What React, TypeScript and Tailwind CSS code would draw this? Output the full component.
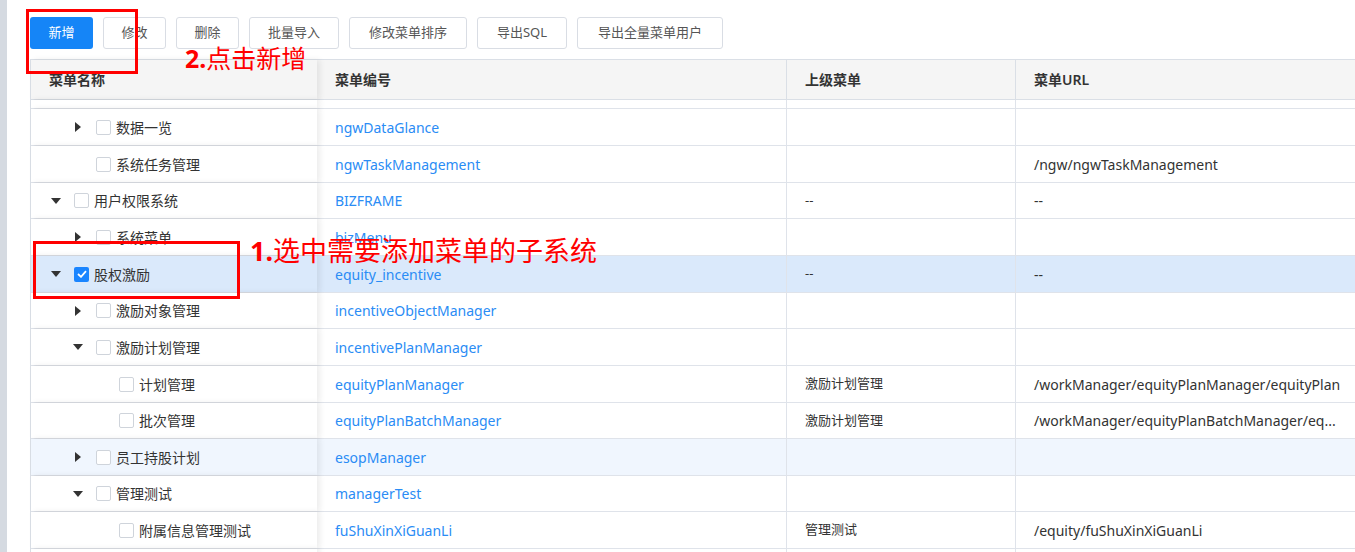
type Row = {
  name: string;
  level: number;
  caret?: "right" | "down";
  checked?: boolean;
  code: string;
  parent?: string;
  url?: string;
  h: number;
  bg?: string;
};

const rows: Row[] = [
  { name: "数据一览", level: 1, caret: "right", code: "ngwDataGlance", h: 37 },
  { name: "系统任务管理", level: 1, code: "ngwTaskManagement", url: "/ngw/ngwTaskManagement", h: 37 },
  { name: "用户权限系统", level: 0, caret: "down", code: "BIZFRAME", parent: "--", url: "--", h: 36 },
  { name: "系统菜单", level: 1, caret: "right", code: "bizMenu", h: 37 },
  { name: "股权激励", level: 0, caret: "down", checked: true, code: "equity_incentive", parent: "--", url: "--", h: 37, bg: "bg-[#dae9fb]" },
  { name: "激励对象管理", level: 1, caret: "right", code: "incentiveObjectManager", h: 36 },
  { name: "激励计划管理", level: 1, caret: "down", code: "incentivePlanManager", h: 37 },
  { name: "计划管理", level: 2, code: "equityPlanManager", parent: "激励计划管理", url: "/workManager/equityPlanManager/equityPlan", h: 37 },
  { name: "批次管理", level: 2, code: "equityPlanBatchManager", parent: "激励计划管理", url: "/workManager/equityPlanBatchManager/eq...", h: 36 },
  { name: "员工持股计划", level: 1, caret: "right", code: "esopManager", h: 37, bg: "bg-[#f0f6fe]" },
  { name: "管理测试", level: 1, caret: "down", code: "managerTest", h: 36 },
  { name: "附属信息管理测试", level: 2, code: "fuShuXinXiGuanLi", parent: "管理测试", url: "/equity/fuShuXinXiGuanLi", h: 37 },
  { name: "", level: 1, code: "", h: 37 },
];

const indent = ["pl-0", "pl-[22px]", "pl-[45px]"];

function Caret({ dir }: { dir?: "right" | "down" }) {
  return (
    <div className="w-4 h-4 mr-[10px] flex items-center justify-center shrink-0">
      {dir === "down" && (
        <svg width="10" height="6" viewBox="0 0 10 6">
          <path d="M0 0 L10 0 L5 6 Z" fill="#333" />
        </svg>
      )}
      {dir === "right" && (
        <svg width="6" height="10" viewBox="0 0 6 10">
          <path d="M0 0 L6 5 L0 10 Z" fill="#333" />
        </svg>
      )}
    </div>
  );
}

function Checkbox({ checked }: { checked?: boolean }) {
  if (checked)
    return (
      <div className="w-[15px] h-[15px] rounded-[2px] bg-[#1a85ff] flex items-center justify-center shrink-0">
        <svg width="10" height="8" viewBox="0 0 10 8">
          <path d="M1 4 L4 6.8 L9 1.2" stroke="#fff" strokeWidth="1.8" fill="none" />
        </svg>
      </div>
    );
  return <div className="w-[15px] h-[15px] rounded-[2px] border border-[#cfd4db] bg-white shrink-0" />;
}

const buttons = [
  { t: "修改", w: "w-[63px]" },
  { t: "删除", w: "w-[63px]" },
  { t: "批量导入", w: "w-[90px]" },
  { t: "修改菜单排序", w: "w-[118px]" },
  { t: "导出SQL", w: "w-[90px]" },
  { t: "导出全量菜单用户", w: "w-[146px]" },
];

export default function App() {
  return (
    <div
      className="relative flex h-[552px] w-[1355px] overflow-hidden bg-white text-[14px] text-[#333]"
      style={{ fontFamily: '"Noto Sans", "Noto Sans CJK SC", sans-serif' }}
    >
      {/* left strip */}
      <div className="w-[7px] shrink-0 bg-[#d5dae1]" />

      <div className="flex-1 pl-[23px] pt-[17px]">
        {/* toolbar */}
        <div className="flex gap-[10px] text-[13px]">
          <button className="h-8 w-[63px] rounded-[3px] bg-[#1585f7] text-white">新增</button>
          {buttons.map((b) => (
            <button
              key={b.t}
              className={`h-8 ${b.w} rounded-[3px] border border-[#d9dde4] bg-white text-[#555]`}
            >
              {b.t}
            </button>
          ))}
        </div>

        {/* table */}
        <div className="mt-[10px] border-l border-t border-[#dadfe6]">
          <div className="flex h-[40px] bg-[#f5f5f5] border-b border-[#dadfe6] font-semibold text-[#333]">
            <div className="relative z-10 w-[286px] shrink-0 pl-[18px] flex items-center bg-[#f5f5f5] shadow-[3px_0_6px_rgba(0,0,0,0.08)]">
              菜单名称
            </div>
            <div className="w-[470px] shrink-0 pl-[18px] flex items-center border-r border-[#dadfe6]">菜单编号</div>
            <div className="w-[229px] shrink-0 pl-[18px] flex items-center border-r border-[#dadfe6]">上级菜单</div>
            <div className="flex-1 pl-[18px] flex items-center">菜单URL</div>
          </div>

          <div className="flex h-[9px] border-b border-[#dfe3ea]">
            <div className="relative z-10 w-[286px] shrink-0 bg-white shadow-[3px_0_6px_rgba(0,0,0,0.08)]" />
            <div className="w-[470px] shrink-0 border-r border-[#dfe3ea]" />
            <div className="w-[229px] shrink-0 border-r border-[#dfe3ea]" />
            <div className="flex-1" />
          </div>

          {rows.map((r, i) => (
            <div
              key={i}
              className={`flex border-b border-[#dfe3ea] ${r.bg ?? "bg-white"}`}
              style={{ height: r.h }}
            >
              <div
                className={`relative z-10 w-[286px] shrink-0 pl-[17px] flex items-center shadow-[3px_0_6px_rgba(0,0,0,0.08)] ${r.bg ?? "bg-white"}`}
              >
                {r.name && (
                  <div className={`flex items-center ${indent[r.level]}`}>
                    <Caret dir={r.caret} />
                    <Checkbox checked={r.checked} />
                    <span className="ml-[5px]">{r.name}</span>
                  </div>
                )}
              </div>
              <div className="w-[470px] shrink-0 pl-[18px] flex items-center border-r border-[#dfe3ea] text-[#2a8cf5]">
                {r.code}
              </div>
              <div className="w-[229px] shrink-0 pl-[18px] flex items-center border-r border-[#dfe3ea] text-[13px]">
                {r.parent}
              </div>
              <div className="flex-1 pl-[18px] flex items-center whitespace-nowrap overflow-hidden">{r.url}</div>
            </div>
          ))}
        </div>
      </div>

      {/* annotations */}
      <div className="absolute left-[26px] top-[9px] w-[112px] h-[65px] border-[3px] border-[#ff0000] z-20" />
      <div className="absolute left-[185px] top-[46px] z-20 text-[25px] text-[#ff0000] leading-none whitespace-nowrap">
        <span className="font-bold">2.</span>点击新增
      </div>
      <div className="absolute left-[33px] top-[241px] w-[207px] h-[58px] border-[3px] border-[#ff0000] z-20" />
      <div className="absolute left-[250px] top-[237px] z-20 text-[27px] text-[#ff0000] leading-none whitespace-nowrap">
        <span className="font-bold">1.</span>选中需要添加菜单的子系统
      </div>
    </div>
  );
}
